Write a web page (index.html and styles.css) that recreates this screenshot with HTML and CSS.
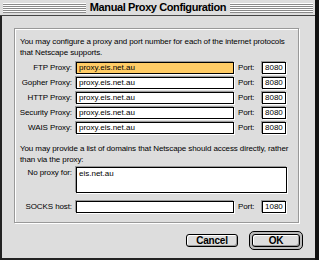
FILE: index.html
```html
<!DOCTYPE html>
<html>
<head>
<meta charset="utf-8">
<link rel="stylesheet" href="styles.css">
</head>
<body>
<div class="window">
  <div class="titlebar">
    <span class="stripes"></span>
    <span class="title">Manual Proxy Configuration</span>
    <span class="stripes"></span>
  </div>
  <div class="content">
    <div class="group">
      <p class="para intro">You may configure a proxy and port number for each of the internet protocols<br>that Netscape supports.</p>
      <div class="rows">
        <span class="label">FTP Proxy:</span><span class="field active">proxy.eis.net.au</span><span class="plabel">Port:</span><span class="field">8080</span>
        <span class="label">Gopher Proxy:</span><span class="field">proxy.eis.net.au</span><span class="plabel">Port:</span><span class="field">8080</span>
        <span class="label">HTTP Proxy:</span><span class="field">proxy.eis.net.au</span><span class="plabel">Port:</span><span class="field">8080</span>
        <span class="label">Security Proxy:</span><span class="field">proxy.eis.net.au</span><span class="plabel">Port:</span><span class="field">8080</span>
        <span class="label">WAIS Proxy:</span><span class="field">proxy.eis.net.au</span><span class="plabel">Port:</span><span class="field">8080</span>
      </div>
      <p class="para second">You may provide a list of domains that Netscape should access directly, rather<br>than via the proxy:</p>
      <div class="noproxy">
        <span class="label">No proxy for:</span><span class="field area">eis.net.au</span>
      </div>
      <div class="rows socks">
        <span class="label">SOCKS host:</span><span class="field"></span><span class="plabel">Port:</span><span class="field">1080</span>
      </div>
    </div>
    <div class="buttons">
      <span class="btn">Cancel</span>
      <span class="default"><span class="btn">OK</span></span>
    </div>
  </div>
</div>
</body>
</html>
```

FILE: styles.css
```css
* { box-sizing: border-box; margin: 0; padding: 0; }
html, body { width: 319px; height: 260px; overflow: hidden; }
body {
  background: #dddddd;
  font-family: "Liberation Sans", Arial, sans-serif;
  font-size: 8px;
  color: #000;
}
.window {
  width: 319px;
  height: 260px;
  display: flex;
  flex-direction: column;
  border-right: 4px solid #111;
}
.titlebar {
  height: 16px;
  flex: none;
  display: flex;
  align-items: center;
  gap: 4px;
  padding: 0 2px 0 3px;
  border-bottom: 1px solid #444;
  background: #dddddd;
}
.stripes {
  flex: 1;
  height: 10px;
  background: repeating-linear-gradient(to bottom, #ffffff 0 1px, #8a8a8a 1px 2px);
}
.title {
  font-weight: bold;
  font-size: 11px;
  letter-spacing: -0.4px;
  line-height: 15px;
}
.content {
  flex: 1;
  border-left: 2px solid #222;
  border-bottom: 2px solid #222;
  padding: 12px 12px 0 12px;
  display: flex;
  flex-direction: column;
}
.group {
  width: 285px;
  height: 195px;
  border: 1px solid #999;
  box-shadow: inset 1px 1px 0 #fff, 1px 1px 0 #fff;
  padding-top: 7px;
}
.para {
  line-height: 11px;
  margin-left: 5px;
  letter-spacing: -0.1px;
  white-space: nowrap;
}
.rows {
  display: grid;
  grid-template-columns: 57px 158px 20px 24px;
  grid-auto-rows: 12px;
  column-gap: 4px;
  row-gap: 3px;
  margin-top: 4px;
}
.label, .plabel {
  line-height: 12px;
  white-space: nowrap;
  letter-spacing: -0.1px;
}
.label { text-align: right; }
.field {
  background: #fff;
  border: 1px solid #000;
  box-shadow: -1px -1px 0 #999, 1px 1px 0 #fff;
  line-height: 10px;
  padding-left: 2px;
  white-space: nowrap;
  overflow: hidden;
}
.field.active { background: #ffcc66; }
.second { margin-top: 9px; }
.noproxy {
  display: grid;
  grid-template-columns: 57px 211px;
  column-gap: 4px;
  margin-top: 2px;
}
.noproxy .label { line-height: 12px; }
.field.area { height: 26px; padding-top: 1px; }
.socks { margin-top: 8px; }
.buttons {
  display: flex;
  justify-content: flex-end;
  align-items: center;
  gap: 11px;
  margin-top: 8px;
}
.btn {
  display: flex;
  align-items: center;
  justify-content: center;
  width: 52px;
  height: 13px;
  border: 1px solid #000;
  border-radius: 3px;
  background: #dddddd;
  box-shadow: inset 1px 1px 0 #fff, inset -1px -1px 0 #999;
  font-weight: bold;
  font-size: 10px;
  letter-spacing: -0.2px;
}
.default {
  display: flex;
  padding: 2px;
  border: 1px solid #000;
  border-radius: 5px;
  background: #bbb;
}
.default .btn { width: 48px; }
```
